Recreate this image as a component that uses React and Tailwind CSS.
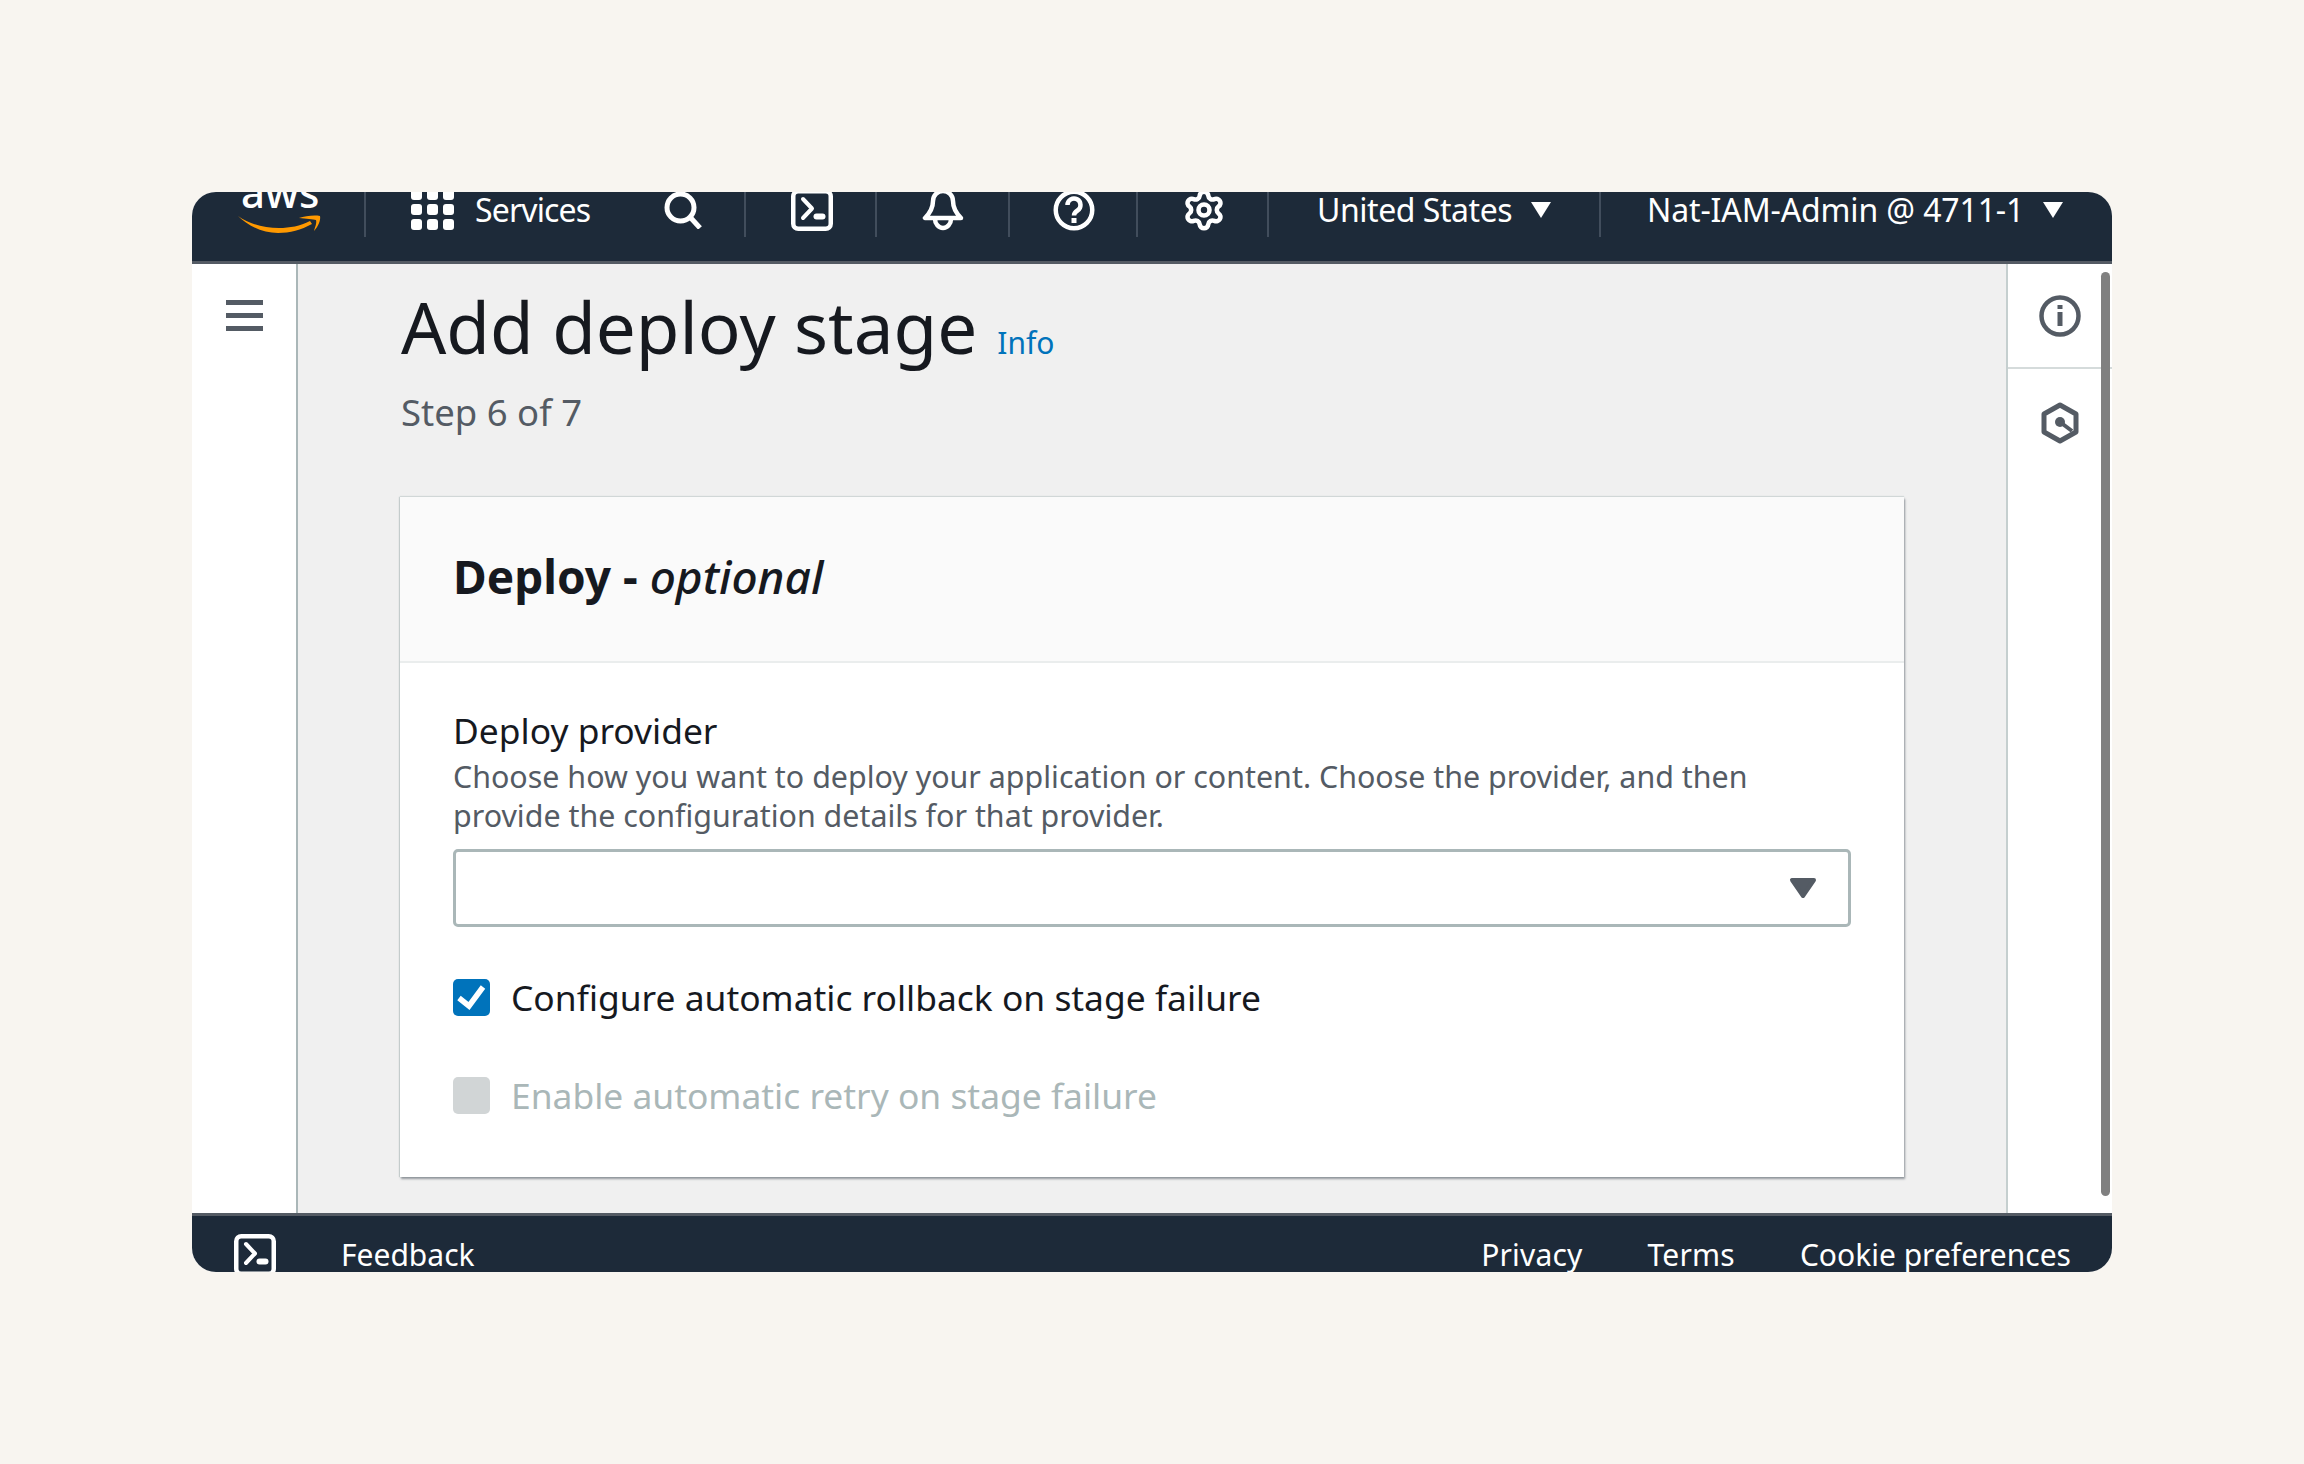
import { Settings } from "lucide-react";

const sans = "font-['Noto_Sans',sans-serif]";

function Terminal({ className }) {
  return (
    <svg viewBox="0 0 42 42" className={className} fill="none" stroke="#fff">
      <rect x="2.25" y="2.25" width="37.5" height="37.5" rx="5" strokeWidth="4.5" />
      <path d="M12 10l9 9.5-9 9.5" strokeWidth="4" strokeLinecap="round" strokeLinejoin="round" />
      <path d="M25.5 27.5h6" strokeWidth="6" strokeLinecap="round" />
    </svg>
  );
}

function NavCell({ className, children }) {
  return (
    <div className={`flex h-[45px] shrink-0 items-start justify-center border-r-2 border-[#414d5c] ${className}`}>
      <div className="flex h-[36px] items-center">{children}</div>
    </div>
  );
}

function Caret() {
  return (
    <svg viewBox="0 0 22 18" className="h-[18px] w-[22px]">
      <path d="M1 1h20L11 17z" fill="#fff" />
    </svg>
  );
}

function TopBar() {
  return (
    <header className="flex h-[72px] shrink-0 items-start overflow-hidden border-b-[3px] border-[#545b64] bg-[#1d2a39] text-[32px] text-white">
      <NavCell className="w-[174px] !justify-start pl-[46px]">
        <div className="relative h-[36px] w-[84px]">
          <span className="absolute left-[3px] top-[-25px] text-[42px] font-medium leading-[50px]">aws</span>
          <svg viewBox="0 0 84 18" className="absolute left-[-1px] top-[23px] h-[18px] w-[84px]" fill="#f90">
            <path d="M1 1C12 9 27 13 42 13c11 0 21-2 31-7l2 3C64 15 53 18 41 18 26 18 11 11 1 1z" />
            <path d="M62 3c6-2 15-3 21-2 1 4-2 11-6 15 1-4 3-8 2-11-3-1-10-1-17-2z" />
          </svg>
        </div>
      </NavCell>
      <NavCell className="w-[380px] !justify-start pl-[45px]">
        <svg viewBox="0 0 43 42" className="h-[42px] w-[43px]" fill="#fff">
          {[0, 15, 30].map((y) =>
            [0, 16, 32].map((x) => <rect key={`${x}-${y}`} x={x} y={y} width="11" height="11" rx="3" />)
          )}
        </svg>
        <span className="ml-[21px] leading-none tracking-[-0.85px]">Services</span>
        <svg viewBox="0 0 38 38" className="ml-[74px] h-[38px] w-[38px]" fill="none" stroke="#fff" strokeWidth="5">
          <circle cx="16.5" cy="16.5" r="13.5" />
          <path d="M26 26l10 11" />
        </svg>
      </NavCell>
      <NavCell className="w-[131px] pl-[2px]">
        <Terminal className="h-[42px] w-[42px]" />
      </NavCell>
      <NavCell className="w-[133px]">
        <svg viewBox="0 0 42 42" className="h-[42px] w-[42px]" fill="none" stroke="#fff" strokeWidth="4.5" strokeLinejoin="round">
          <path d="M3 29h36c-5-5-8-10-8-17a10 10 0 0 0-20 0c0 7-3 12-8 17z" />
          <path d="M13 30a8 9 0 0 0 16 0" />
        </svg>
      </NavCell>
      <NavCell className="w-[128px] pl-[1px]">
        <svg viewBox="0 0 42 42" className="h-[42px] w-[42px]" fill="none" stroke="#fff" strokeWidth="4.5">
          <circle cx="21" cy="21" r="18.25" />
          <path d="M14.5 16a6.5 6.5 0 1 1 10 5.5c-2 1.300-3.500 2.500-3.500 5" />
          <rect x="18.500" y="29" width="5" height="5" fill="#fff" stroke="none" />
        </svg>
      </NavCell>
      <NavCell className="w-[131px] pl-[2px]">
        <Settings size={44} strokeWidth={2.5} color="#fff" />
      </NavCell>
      <NavCell className="w-[332px] !justify-start pl-[48px]">
        <span className="leading-none tracking-[-0.45px]">United States</span>
        <span className="ml-[18px]"><Caret /></span>
      </NavCell>
      <div className="flex h-[36px] shrink-0 items-center pl-[46px]">
        <span className="leading-none tracking-[-0.13px]">Nat-IAM-Admin @ 4711-1</span>
        <span className="ml-[18px]"><Caret /></span>
      </div>
    </header>
  );
}

function Check({ on, children }) {
  return (
    <label className={`flex items-center gap-[21px] text-[35.4px] leading-[44px] ${on ? "text-[#16191f]" : "text-[#aab7b8]"}`}>
      <span className={`flex h-[37px] w-[37px] shrink-0 items-center justify-center rounded-[5px] ${on ? "bg-[#0073bb]" : "bg-[#d1d5d6]"}`}>
        {on && (
          <svg viewBox="0 0 37 37" className="h-[37px] w-[37px]" fill="none" stroke="#fff" strokeWidth="5.5">
            <path d="M6 19l10 8L30 8" />
          </svg>
        )}
      </span>
      {children}
    </label>
  );
}

function Card() {
  return (
    <section className="w-[1504px] bg-white shadow-[1px_2px_2px_0_rgba(84,91,100,0.6),-1px_0_1px_0_rgba(170,183,184,0.5),0_-1px_1px_0_rgba(170,183,184,0.35)]">
      <div className="flex h-[166px] items-center border-b-2 border-[#eaeded] bg-[#fafafa] px-[53px] pb-[5px]">
        <h2 className="text-[46px] font-bold text-[#16191f]">
          Deploy - <em className="font-medium">optional</em>
        </h2>
      </div>
      <div className="px-[53px] pt-[44px]">
        <div className="text-[35.4px] leading-[46px] text-[#16191f]">Deploy provider</div>
        <p className="mt-[4px] w-[1340px] text-[30.4px] leading-[39px] text-[#545b64]">
          Choose how you want to deploy your application or content. Choose the provider, and then provide the configuration details for that provider.
        </p>
        <div className="mt-[14px] flex h-[78px] items-center justify-end rounded-[5px] border-[3px] border-[#aab7b8] pr-[31px]">
          <svg viewBox="0 0 28 22" className="h-[22px] w-[28px]">
            <path d="M3 3h22L14 19z" fill="#545b64" stroke="#545b64" strokeWidth="4" strokeLinejoin="round" />
          </svg>
        </div>
        <div className="mt-[48px] flex flex-col gap-[54px] pb-[60px]">
          <Check on>Configure automatic rollback on stage failure</Check>
          <Check>Enable automatic retry on stage failure</Check>
        </div>
      </div>
    </section>
  );
}

export default function App() {
  return (
    <div className={`flex h-[1464px] w-[2304px] items-start justify-center bg-[#f8f5f0] pt-[192px] ${sans}`}>
      <div className="relative flex h-[1080px] w-[1920px] flex-col overflow-hidden rounded-[24px] bg-white">
        <TopBar />
        <div className="flex min-h-0 flex-1">
          <aside className="w-[106px] shrink-0 border-r-2 border-[#aab7b8] pl-[34px] pt-[36px]">
            <div className="flex w-[37px] flex-col gap-[8px]">
              <span className="h-[5px] bg-[#545b64]" />
              <span className="h-[5px] bg-[#545b64]" />
              <span className="h-[5px] bg-[#545b64]" />
            </div>
          </aside>
          <main className="min-w-0 flex-1 bg-[#f0f0f0] pl-[102px]">
            <div className="flex items-baseline pt-[18px] pl-[1px]">
              <h1 className="text-[71px] leading-[90px] text-[#16191f]">Add deploy stage</h1>
              <a className="ml-[20px] text-[30px] text-[#0073bb]">Info</a>
            </div>
            <div className="mt-[18px] pl-[1px] text-[36.5px] leading-[44px] text-[#545b64]">Step 6 of 7</div>
            <div className="mt-[63px]">
              <Card />
            </div>
          </main>
          <aside className="w-[106px] shrink-0 border-l-2 border-[#c5cfcf]">
            <div className="flex h-[105px] items-start justify-center border-b-2 border-[#d5dbdb] pt-[31px]">
              <svg viewBox="0 0 42 42" className="h-[42px] w-[42px]" fill="none" stroke="#545b64" strokeWidth="4.5">
                <circle cx="21" cy="21" r="18.5" />
                <path d="M21 17v14" strokeWidth="5" />
                <path d="M21 10v4" strokeWidth="5" />
              </svg>
            </div>
            <div className="flex justify-center pt-[33px]">
              <svg viewBox="0 0 38 42" className="h-[42px] w-[38px]" fill="none" stroke="#545b64" strokeWidth="5" strokeLinejoin="round">
                <path d="M19 3l16 9v18l-16 9-16-9V12z" />
                <circle cx="19" cy="20" r="5" fill="#545b64" stroke="none" />
                <path d="M19 20l12 9" strokeWidth="4" />
              </svg>
            </div>
          </aside>
        </div>
        <footer className="flex h-[59px] shrink-0 items-start border-t-[3px] border-[#545b64] bg-[#1d2a39] pl-[42px] pr-[41px] pt-[18px] text-[30px] leading-[42px] text-white">
          <Terminal className="h-[42px] w-[42px]" />
          <span className="ml-[65px]">Feedback</span>
          <span className="ml-auto tracking-[0.2px]">Privacy</span>
          <span className="ml-[65px] tracking-[0.2px]">Terms</span>
          <span className="ml-[65px]">Cookie preferences</span>
        </footer>
        {/* overlay scrollbar */}
        <div className="absolute left-[1909px] top-[80px] h-[924px] w-[9px] rounded-full bg-[#808080]" />
      </div>
    </div>
  );
}
